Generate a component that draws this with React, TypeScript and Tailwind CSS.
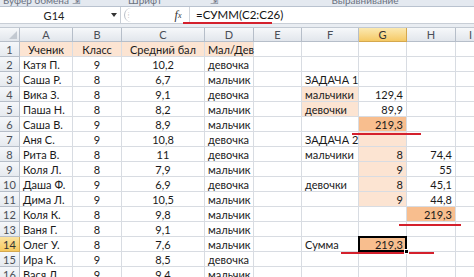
import React from "react";

type Cell = { t?: string; al?: "l" | "c" | "r"; bg?: string };

const W = [53, 49, 83, 49, 48, 57, 48, 49, 30];
const COLS = ["A", "B", "C", "D", "E", "F", "G", "H", "I"];

const PEACH = "bg-[#fce4d2]";
const ORANGE = "bg-[#f8be8e]";

const base: [string, string, string, string][] = [
  ["Катя П.", "9", "10,2", "девочка"],
  ["Саша Р.", "8", "6,7", "мальчик"],
  ["Вика З.", "8", "9,1", "девочка"],
  ["Паша Н.", "8", "8,2", "мальчик"],
  ["Саша В.", "9", "8,9", "мальчик"],
  ["Аня С.", "9", "10,8", "девочка"],
  ["Рита В.", "8", "11", "девочка"],
  ["Коля Л.", "8", "7,9", "мальчик"],
  ["Даша Ф.", "9", "6,9", "девочка"],
  ["Дима Л.", "9", "10,5", "мальчик"],
  ["Коля К.", "8", "9,8", "мальчик"],
  ["Ваня Г.", "8", "9,1", "мальчик"],
  ["Олег У.", "8", "7,6", "мальчик"],
  ["Ира К.", "9", "8,5", "девочка"],
  ["Вася Л.", "9", "9,4", "мальчик"],
];

const extra: Record<number, Cell[]> = {
  3: [{}, { t: "ЗАДАЧА 1" }, {}, {}],
  4: [{}, { t: "мальчики", bg: PEACH }, { t: "129,4", al: "r" }, {}],
  5: [{}, { t: "девочки", bg: PEACH }, { t: "89,9", al: "r" }, {}],
  6: [{}, {}, { t: "219,3", al: "r", bg: ORANGE }, {}],
  7: [{}, { t: "ЗАДАЧА 2" }, { bg: PEACH }, {}],
  8: [{}, { t: "мальчики" }, { t: "8", al: "r", bg: PEACH }, { t: "74,4", al: "r" }],
  9: [{}, {}, { t: "9", al: "r", bg: PEACH }, { t: "55", al: "r" }],
  10: [{}, { t: "девочки" }, { t: "8", al: "r", bg: PEACH }, { t: "45,1", al: "r" }],
  11: [{}, {}, { t: "9", al: "r", bg: PEACH }, { t: "44,8", al: "r" }],
  12: [{}, {}, {}, { t: "219,3", al: "r", bg: ORANGE }],
  14: [{}, { t: "Сумма" }, { t: "219,3", al: "r", bg: ORANGE }, {}],
};

function rowCells(r: number): Cell[] {
  if (r === 1) {
    return [
      { t: "Ученик", al: "c", bg: PEACH },
      { t: "Класс", al: "c", bg: PEACH },
      { t: "Средний бал", al: "c", bg: PEACH },
      { t: "Мал/Дев", al: "l", bg: PEACH },
      {}, {}, {}, {}, {},
    ];
  }
  const b = base[r - 2];
  const e = extra[r] || [{}, {}, {}, {}];
  return [
    { t: b[0], al: "l" },
    { t: b[1], al: "c" },
    { t: b[2], al: "c" },
    { t: b[3], al: "l" },
    ...e,
    {},
  ];
}

function GridCell({ c, w, sel }: { c: Cell; w: number; sel?: boolean }) {
  const al = c.al === "r" ? "justify-end" : c.al === "c" ? "justify-center" : "justify-start";
  return (
    <div
      style={{ width: w }}
      className={`relative shrink-0 h-full flex items-center ${al} px-[3px] border-r border-b border-[#d8dce2] whitespace-nowrap overflow-visible text-[#1a1a1a] ${c.bg ?? "bg-white"}`}
    >
      <span className="relative z-[1]">{c.t}</span>
      {sel && (
        <>
          <div className="absolute -left-[1px] -top-[1px] -right-[1px] -bottom-[1px] border-2 border-black z-[2]" />
          <div className="absolute -right-[3px] -bottom-[3px] w-[5px] h-[5px] bg-black border border-white z-[3]" />
        </>
      )}
    </div>
  );
}

export default function App() {
  const rows = Array.from({ length: 16 }, (_, i) => i + 1);
  return (
    <div
      className="relative w-[474px] h-[277px] overflow-hidden bg-white text-[11px] leading-none"
      style={{ fontFamily: "Lato, 'Open Sans', sans-serif" }}
    >
      {/* ribbon strip (bottom of group labels) */}
      <div className="h-[7px] overflow-hidden bg-[#e4e9f0] border-b border-[#b9c2cf] flex text-[#6b7280] text-[10px]">
        <div className="w-[72px] flex justify-center -mt-[5px]">Буфер обмена</div>
        <div className="w-[10px] -mt-[5px]">⇲</div>
        <div className="w-[90px] flex justify-center -mt-[5px] ml-[18px]">Шрифт</div>
        <div className="w-[10px] -mt-[5px] ml-[20px]">⇲</div>
        <div className="w-[110px] flex justify-center -mt-[5px] ml-[90px]">Выравнивание</div>
      </div>
      {/* formula bar */}
      <div className="h-[17px] flex items-center bg-white border-b border-[#c8ced6]">
        <div className="w-[121px] h-full flex items-center border-r border-[#c8ced6] relative">
          <div className="flex-1 flex justify-center text-[#222] pr-[12px]">G14</div>
          <div className="absolute right-[3px] top-[6px] w-0 h-0 border-l-[3px] border-r-[3px] border-t-[4px] border-l-transparent border-r-transparent border-t-[#333]" />
        </div>
        <div className="w-[8px] h-[14px] ml-[3px] rounded-l-full border-l border-[#b8bec7] flex items-center justify-center text-[6px] text-[#aaa]">⁞</div>
        <div className="w-[37px] shrink-0" />
        <div className="w-[18px] flex justify-center italic text-[12px] text-[#333]" style={{ fontFamily: "'Liberation Serif', serif" }}>
          <span>f</span><span className="text-[8px] mt-[3px]">x</span>
        </div>
        <div className="w-[1px] h-full bg-[#d0d5dc] ml-[2px]" />
        <div className="pl-[6px] text-[#111] text-[11.5px]">=СУММ(C2:C26)</div>
      </div>
      <div className="h-[4px] bg-[#e9edf2] border-b border-[#c2c9d2]" />
      {/* column headers */}
      <div className="flex h-[14px]">
        <div className="relative w-[20px] shrink-0 bg-gradient-to-b from-[#f6f8fa] to-[#e2e6ec] border-r border-b border-[#b6bec9]">
          <svg className="absolute right-[2px] bottom-[2px]" width="8" height="8"><polygon points="8,0 8,8 0,8" fill="#c3c9d1" /></svg>
        </div>
        {COLS.map((c, i) => (
          <div
            key={c}
            style={{ width: W[i] }}
            className={`shrink-0 flex items-center justify-center border-r border-b text-[11px] ${
              c === "G"
                ? "bg-gradient-to-b from-[#fbe9b0] to-[#f5c964] border-[#d5a84e] text-[#333]"
                : "bg-gradient-to-b from-[#f6f8fa] to-[#e2e6ec] border-[#b6bec9] text-[#4a4f57]"
            }`}
          >
            {c}
          </div>
        ))}
      </div>
      {rows.map((r) => (
        <div key={r} className="flex h-[15px]">
          <div
            className={`w-[20px] shrink-0 flex items-center justify-center border-r border-b ${
              r === 14
                ? "bg-gradient-to-b from-[#fbe3a0] to-[#f6c95e] border-[#d5a84e] text-[#333]"
                : "bg-gradient-to-b from-[#f5f7fa] to-[#e6eaef] border-[#b6bec9] text-[#4a4f57]"
            }`}
          >
            {r}
          </div>
          {rowCells(r).map((c, i) => (
            <GridCell key={i} c={c} w={W[i]} sel={r === 14 && i === 6} />
          ))}
        </div>
      ))}
      {/* red annotation lines */}
      <div className="absolute left-[183px] top-[22px] w-[89px] h-[2px] bg-[#d4202c]" />
      <div className="absolute left-[352px] top-[133px] w-[69px] h-[2px] bg-[#d4202c]" />
      <div className="absolute left-[399px] top-[224px] w-[62px] h-[2px] bg-[#d4202c]" />
      <div className="absolute left-[341px] top-[252px] w-[93px] h-[2px] bg-[#d4202c]" />
    </div>
  );
}
